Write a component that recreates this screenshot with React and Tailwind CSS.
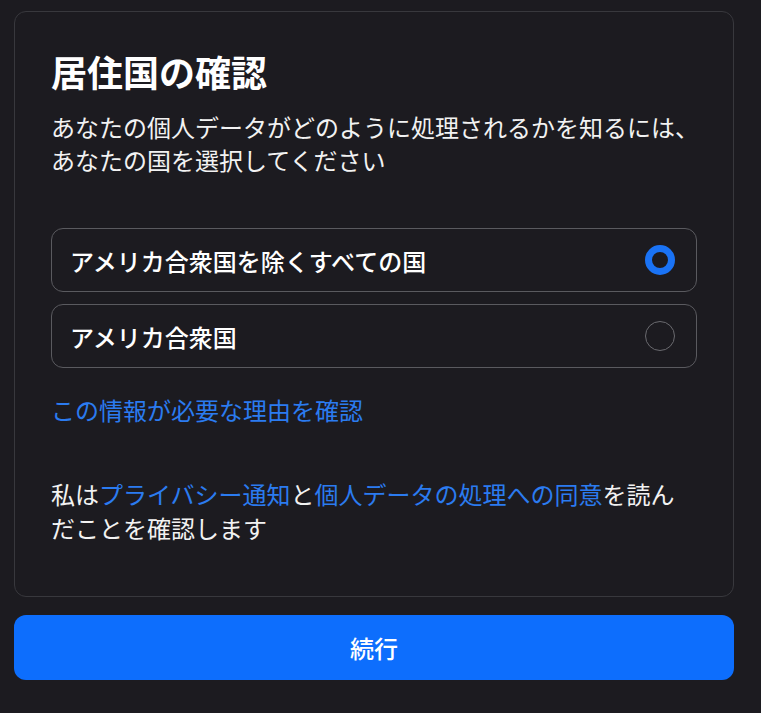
import React, { useState } from "react";

const OPTIONS = [
  { id: "non-us", label: "アメリカ合衆国を除くすべての国" },
  { id: "us", label: "アメリカ合衆国" },
];

export default function App() {
  const [selected, setSelected] = useState("non-us");

  return (
    <div
      className="min-h-[713px] w-[761px] bg-[#1c1b20] pl-[14px] pt-[11px] text-white"
      style={{ fontFamily: '"Noto Sans CJK JP", "Noto Sans", sans-serif' }}
    >
      <div className="w-[720px] rounded-xl border border-[#38383d] px-[36px] pt-[37px] pb-[51px]">
        <h1 className="text-[36px] font-bold leading-[44px]">居住国の確認</h1>
        <p className="mt-[17px] whitespace-nowrap text-[24px] leading-[33px] text-[#f2f2f2]">
          あなたの個人データがどのように処理されるかを知るには、
          <br />
          あなたの国を選択してください
        </p>

        <div className="mt-[52px] flex flex-col gap-3">
          {OPTIONS.map((opt) => (
            <OptionRow
              key={opt.id}
              label={opt.label}
              checked={selected === opt.id}
              onClick={() => setSelected(opt.id)}
            />
          ))}
        </div>

        <a className="mt-[25px] block cursor-pointer text-[24px] leading-[33px] text-[#2b7bf0]">
          この情報が必要な理由を確認
        </a>

        <p className="mt-[51px] whitespace-nowrap text-[24px] leading-[34px] text-[#f2f2f2]">
          私は<span className="text-[#2b7bf0]">プライバシー通知</span>と
          <span className="text-[#2b7bf0]">個人データの処理への同意</span>を読ん
          <br />
          だことを確認します
        </p>
      </div>

      <button className="mt-[18px] flex h-[65px] w-[720px] items-center justify-center rounded-xl bg-[#0d6efd] text-[24px] font-medium text-white">
        続行
      </button>
    </div>
  );
}

const OptionRow = ({ label, checked, onClick }) => (
  <button
    onClick={onClick}
    className="flex h-[64px] w-full items-center justify-between rounded-xl border border-[#5a5a5f] pl-[18px] pr-[21px] text-left"
  >
    <span className="text-[24px] font-medium leading-[33px] text-white">
      {label}
    </span>
    {checked ? (
      <span className="box-border h-[30px] w-[30px] rounded-full border-[7px] border-[#1a73f5] bg-[#1c1b20]" />
    ) : (
      <span className="box-border h-[30px] w-[30px] rounded-full border border-[#6a6a6f]" />
    )}
  </button>
);
